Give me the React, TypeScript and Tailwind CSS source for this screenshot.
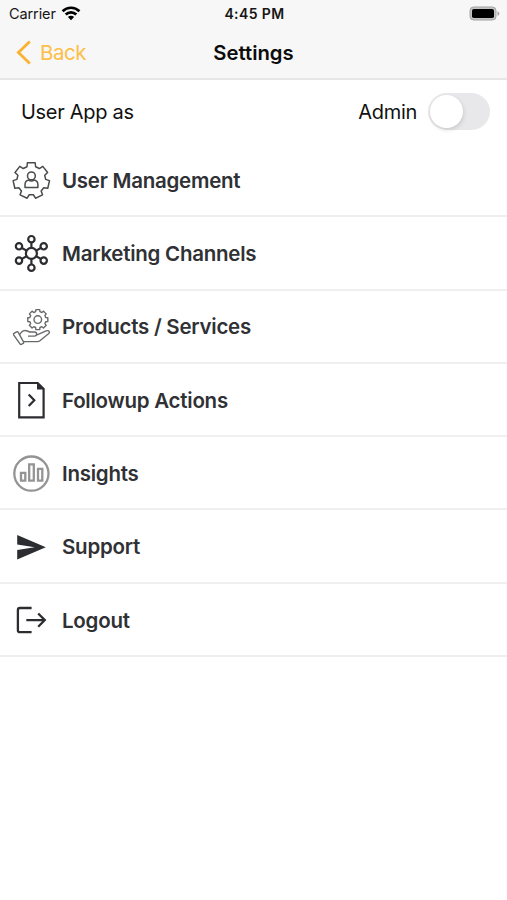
import type { ReactNode } from "react";

// Outline of a gear, first tooth pointing up
function gearPath(cx: number, cy: number, teeth: number, outer: number, inner: number) {
  const step = (Math.PI * 2) / teeth;
  const points: string[] = [];
  for (let i = 0; i < teeth; i++) {
    const mid = i * step - Math.PI / 2;
    const corners = [
      [-0.34, inner],
      [-0.24, outer],
      [0.24, outer],
      [0.34, inner],
    ];
    for (const [offset, r] of corners) {
      const a = mid + offset * step;
      points.push(`${(cx + r * Math.cos(a)).toFixed(2)} ${(cy + r * Math.sin(a)).toFixed(2)}`);
    }
  }
  return `M${points.join("L")}Z`;
}

function Icon({ children, color = "#2c2d30", width = 2 }: { children: ReactNode; color?: string; width?: number }) {
  return (
    <svg
      viewBox="0 0 40 40"
      className="size-10 shrink-0"
      fill="none"
      stroke={color}
      strokeWidth={width}
      strokeLinejoin="round"
      aria-hidden
    >
      {children}
    </svg>
  );
}

function UserGearIcon() {
  return (
    <Icon color="#4a4b4d" width={1.5}>
      <path d={gearPath(20.3, 19.5, 7, 18.2, 14.4)} />
      <circle cx="20.4" cy="14.9" r="3.9" />
      <path d="M14 26.4v-2.6c0-2.4 1.4-4.2 3.6-4.7 1.8 1.1 3.8 1.1 5.6 0 2.2.5 3.7 2.3 3.7 4.7v2.6Z" />
    </Icon>
  );
}

const nodes = [
  [20.4, 5.2],
  [32.7, 12.3],
  [32.7, 26.6],
  [20.4, 33.7],
  [8, 26.6],
  [8, 12.3],
];

const spokes = [
  "M20.4 8.5v5.4",
  "M25.2 16.6l4.6-2.6",
  "M25.2 22.2l4.6 2.7",
  "M20.4 25v5.4",
  "M15.6 22.2l-4.7 2.7",
  "M15.6 16.6L10.9 14",
];

function ChannelsIcon() {
  return (
    <Icon width={2.2}>
      <circle cx="20.4" cy="19.4" r="5.5" />
      {nodes.map(([cx, cy]) => (
        <circle key={`${cx}-${cy}`} cx={cx} cy={cy} r="3.2" />
      ))}
      {spokes.map((d) => (
        <path key={d} d={d} />
      ))}
    </Icon>
  );
}

function ServicesIcon() {
  return (
    <Icon color="#68696b" width={1.4}>
      <g transform="translate(0 .8)">
        <path d={gearPath(26.8, 10.8, 8, 10.2, 8.2)} />
        <circle cx="26.8" cy="10.8" r="3.8" />
        <path d="M3 24.5l2.6-1.5c.6-.3 1.2-.2 1.6.5l5.3 9.6c.3.6.2 1.2-.4 1.5l-1.3.8c-.7.4-1.4.2-1.8-.4L2.6 26c-.3-.6-.2-1.1.4-1.5Z" />
        <path d="M8.5 25.8l2.2-2.7c1.4-1.3 3.5-1.7 5.6-.9l2.5 1h4.6c3 0 3 4.1 0 4.1H17" />
        <path d="M26 26.1l9.2-4c2.8-1 4.3 1.1 2.3 2.9l-8.6 7c-.8.6-1.6.8-2.6.8H12.5" />
      </g>
    </Icon>
  );
}

function FollowupIcon() {
  return (
    <Icon width={2.2}>
      <path strokeLinejoin="miter" d="M8.2 2h18.4l6 6v28.4H8.2Z" />
      <path d="M26.6 2v6h6Z" fill="#2c2d30" strokeWidth="1.2" />
      <path strokeLinejoin="miter" d="M17.7 13.4l5.6 5.8-5.6 5.8" />
    </Icon>
  );
}

function InsightsIcon() {
  return (
    <Icon color="#949494" width={2.3}>
      <circle cx="20.4" cy="19.6" r="17.1" />
      <g strokeLinejoin="miter">
        <path d="M10 18.8h4.3v7.8H10Z" />
        <path d="M18.2 10.4h4.6v16.2h-4.6Z" />
        <path d="M27 14.8h4.3v11.8H27Z" />
      </g>
    </Icon>
  );
}

function SupportIcon() {
  return (
    <Icon width={0}>
      <path fill="#2c2d30" d="M6.2 7L34.8 19.3 6.2 31.6v-9.5l17.5-2.8L6.2 16.5Z" />
    </Icon>
  );
}

function LogoutIcon() {
  return (
    <Icon width={2.3}>
      <path d="M20.6 7H8.9a2 2 0 0 0-2 2v20.2a2 2 0 0 0 2 2h11.7" />
      <path strokeLinejoin="miter" d="M15.3 19.1H34M27.2 12.5l6.6 6.6-6.6 6.6" />
    </Icon>
  );
}

const items = [
  { label: "User Management", icon: <UserGearIcon /> },
  { label: "Marketing Channels", icon: <ChannelsIcon /> },
  { label: "Products / Services", icon: <ServicesIcon /> },
  { label: "Followup Actions", icon: <FollowupIcon /> },
  { label: "Insights", icon: <InsightsIcon /> },
  { label: "Support", icon: <SupportIcon /> },
  { label: "Logout", icon: <LogoutIcon /> },
];

function StatusBar() {
  return (
    <div className="grid h-[27px] grid-cols-3 items-center pl-[9px] pr-[7px] text-[#161616]">
      <div className="flex items-center gap-[5px]">
        <span className="text-[14.5px] tracking-[-0.1px]">Carrier</span>
        <svg viewBox="0 0 20 15" className="h-[15px] w-5" fill="none" stroke="#000" strokeWidth="2.7" aria-hidden>
          <path d="M1.6 5.2a12 12 0 0 1 16.8 0" />
          <path d="M4.7 8.5a7.6 7.6 0 0 1 10.6 0" />
          <path d="M10 14.2l-3.1-3.1a4.4 4.4 0 0 1 6.2 0Z" fill="#000" stroke="none" />
        </svg>
      </div>
      <span className="text-center text-[14px] font-semibold tracking-[0.4px]">4:45 PM</span>
      <svg viewBox="0 0 31 15" className="h-[15px] w-[31px] justify-self-end" aria-hidden>
        <rect x="1" y="1" width="26" height="13" rx="3.6" fill="#c4c4c4" stroke="#a3a3a3" />
        <rect x="3" y="3" width="22" height="9" rx="1.8" fill="#000" />
        <path d="M28.5 5.2c2.4.8 2.4 3.8 0 4.6Z" fill="#a3a3a3" />
      </svg>
    </div>
  );
}

function NavBar() {
  return (
    <div className="grid h-[52px] grid-cols-3 items-center px-4">
      <button className="flex items-center gap-2 text-left text-[20.5px] tracking-[-0.5px] text-[#fcbf49]">
        <svg viewBox="0 0 16 26" className="h-[26px] w-4" fill="none" stroke="#fbb232" strokeWidth="2.8" aria-hidden>
          <path d="M13.8 1.5L2.4 12.5l11.4 11" />
        </svg>
        Back
      </button>
      <h1 className="text-center text-[20.3px] font-semibold text-[#0c0c0c]">Settings</h1>
    </div>
  );
}

export default function App() {
  return (
    <div className="h-[900px] w-[507px] overflow-hidden bg-white font-['Inter',sans-serif]">
      <header className="h-20 border-b-2 border-[#e6e6e6] bg-[#f7f7f7]">
        <StatusBar />
        <NavBar />
      </header>
      <div className="flex h-[63px] items-center pl-[21px] pr-[17px] text-[20px] tracking-[-0.3px] text-[#111]">
        <span>User App as</span>
        <span className="ml-auto mr-[11px]">Admin</span>
        <button role="switch" aria-checked={false} className="h-[37px] w-[62px] rounded-full bg-[#e8e8ea] p-0.5">
          <span className="block size-[33px] rounded-full bg-white shadow-[1px_2px_4px_rgba(0,0,0,0.12)]" />
        </button>
      </div>
      <ul className="pt-px">
        {items.map(({ label, icon }) => (
          <li
            key={label}
            className="flex h-[73.3px] items-center gap-[11px] border-b-2 border-[#efefef] pl-[11px] pt-[3px] text-[20.5px] font-semibold tracking-[-0.25px] text-[#303134]"
          >
            {icon}
            <span>{label}</span>
          </li>
        ))}
      </ul>
    </div>
  );
}
